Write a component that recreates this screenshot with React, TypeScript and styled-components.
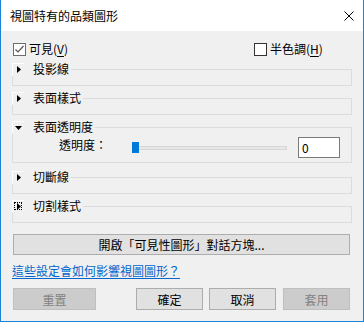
import React from 'react';
import styled, { createGlobalStyle } from 'styled-components';

const GlobalStyle = createGlobalStyle`
    html, body {
        margin:0;
        padding:0;
        background:#ffffff;
    }
    body {
        font-family:"Noto Sans CJK TC", "Noto Sans", sans-serif;
        font-size:12px;
        color:#000000;
    }
`
const Window = styled.div`
    width:364px;
    height:322px;
    box-sizing:border-box;
    border:1px solid #1883d7;
    border-top:none;
    background-color:#f0f0f0;
    display:flex;
    flex-direction:column;
`
const TitleBar = styled.div`
    height:31px;
    background-color:#ffffff;
    display:flex;
    align-items:center;
    justify-content:space-between;
    padding:0 9px 0 9px;
`
const TitleText = styled.span`
    font-size:12px;
    line-height:14px;
`
const Body = styled.div`
    flex:1;
    padding:11px 11px 0 11px;
    display:flex;
    flex-direction:column;
`
const CheckRow = styled.div`
    display:grid;
    grid-template-columns:241px auto;
    height:14px;
    margin-left:1px;
`
const CheckLabel = styled.label`
    display:flex;
    align-items:center;
    line-height:14px;
`
const Box = styled.span<{ $checked?: boolean }>`
    width:13px;
    height:13px;
    box-sizing:border-box;
    border:1px solid ${p => (p.$checked ? '#6d6d6d' : '#333333')};
    background:#ffffff;
    margin-right:3px;
    display:flex;
    align-items:center;
    justify-content:center;
`
const Key = styled.u`
    text-underline-offset:2px;
`
const Sections = styled.div`
    margin-top:6px;
    display:flex;
    flex-direction:column;
`
const SectionWrap = styled.div<{ $gap: number }>`
    margin-bottom:${p => p.$gap}px;
`
const Header = styled.div`
    display:flex;
    height:14px;
    align-items:center;
`
const ArrowBox = styled.span<{ $focus?: boolean }>`
    width:12px;
    height:12px;
    box-sizing:border-box;
    border-top:1px solid #ffffff;
    border-left:1px solid #ffffff;
    display:flex;
    align-items:center;
    justify-content:center;
    outline:${p => (p.$focus ? '1px dotted #000' : 'none')};
    outline-offset:-3px;
`
const HeaderLabel = styled.span`
    margin-left:9px;
    line-height:14px;
`
const HeaderLine = styled.span`
    flex:1;
    align-self:stretch;
    margin-top:7px;
    margin-left:2px;
    border-top:1px solid #dcdcdc;
    border-right:1px solid #dcdcdc;
`
const SectionBody = styled.div<{ $height: number }>`
    height:${p => p.$height}px;
    box-sizing:border-box;
    border:1px solid #dcdcdc;
    border-top:none;
`
const OpacityRow = styled.div`
    display:flex;
    align-items:center;
    padding:3px 0 0 46px;
`
const RowLabel = styled.span`
    width:73px;
    line-height:14px;
    margin-top:-6px;
`
const Slider = styled.div`
    width:155px;
    height:11px;
    position:relative;
    display:flex;
    align-items:center;
`
const Track = styled.div`
    width:100%;
    height:4px;
    box-sizing:border-box;
    background:#e7e7e7;
    border:1px solid #d6d6d6;
`
const Thumb = styled.div`
    position:absolute;
    left:0;
    top:0;
    width:7px;
    height:11px;
    background:#0078d7;
`
const NumberBox = styled.div`
    width:42px;
    height:21px;
    box-sizing:border-box;
    margin-left:11px;
    border:1px solid #7a7a7a;
    background:#ffffff;
    padding-left:3px;
    line-height:19px;
`
const WideButton = styled.button`
    margin:11px 0 0 1px;
    width:337px;
    height:21px;
    box-sizing:border-box;
    border:1px solid #adadad;
    background:#e1e1e1;
    font-family:inherit;
    font-size:12px;
    padding:0;
    color:#000;
`
const HelpLink = styled.a`
    margin-top:8px;
    line-height:16px;
    color:#0066cc;
    text-decoration:underline;
    text-underline-offset:2px;
    align-self:flex-start;
`
const Footer = styled.div`
    display:flex;
    margin:9px 0 0 1px;
`
const DlgButton = styled.button<{ $width: number; $left: number }>`
    width:${p => p.$width}px;
    margin-left:${p => p.$left}px;
    height:22px;
    box-sizing:border-box;
    border:1px solid ${p => (p.disabled ? '#bfbfbf' : '#adadad')};
    background:${p => (p.disabled ? '#cccccc' : '#e1e1e1')};
    color:${p => (p.disabled ? '#838383' : '#000000')};
    font-family:inherit;
    font-size:12px;
    padding:0;
`

const RightArrow = () => (
    <svg width="4" height="7" viewBox="0 0 4 7"><path d="M0 0L4 3.5L0 7Z" fill="#000" /></svg>
)
const DownArrow = () => (
    <svg width="7" height="4" viewBox="0 0 7 4"><path d="M0 0H7L3.5 4Z" fill="#000" /></svg>
)

type SectionProps = {
    title: string;
    open?: boolean;
    focus?: boolean;
    gap: number;
    children?: React.ReactNode;
}

const Section = ({ title, open, focus, gap, children }: SectionProps) => (
    <SectionWrap $gap={gap}>
        <Header>
            <ArrowBox $focus={focus}>{open ? <DownArrow /> : <RightArrow />}</ArrowBox>
            <HeaderLabel>{title}</HeaderLabel>
            <HeaderLine />
        </Header>
        <SectionBody $height={open ? 29 : 10}>{children}</SectionBody>
    </SectionWrap>
)

export default function App() {
    return (
        <>
            <GlobalStyle />
            <Window>
                <TitleBar>
                    <TitleText>視圖特有的品類圖形</TitleText>
                    <svg width="10" height="10" viewBox="0 0 10 10">
                        <path d="M0.5 0.5L9.5 9.5M9.5 0.5L0.5 9.5" stroke="#000" strokeWidth="1" />
                    </svg>
                </TitleBar>
                <Body>
                    <CheckRow>
                        <CheckLabel>
                            <Box $checked>
                                <svg width="11" height="11" viewBox="0 0 11 11">
                                    <path d="M1.5 5.5L4 8L9.5 2" stroke="#555" strokeWidth="1.2" fill="none" />
                                </svg>
                            </Box>
                            可見(<Key>V</Key>)
                        </CheckLabel>
                        <CheckLabel>
                            <Box />
                            半色調(<Key>H</Key>)
                        </CheckLabel>
                    </CheckRow>
                    <Sections>
                        <Section title="投影線" gap={5} />
                        <Section title="表面樣式" gap={5} />
                        <Section title="表面透明度" open gap={7}>
                            <OpacityRow>
                                <RowLabel>透明度：</RowLabel>
                                <Slider>
                                    <Track />
                                    <Thumb />
                                </Slider>
                                <NumberBox>0</NumberBox>
                            </OpacityRow>
                        </Section>
                        <Section title="切斷線" gap={5} />
                        <Section title="切割樣式" focus gap={0} />
                    </Sections>
                    <WideButton>開啟「可見性圖形」對話方塊...</WideButton>
                    <HelpLink href="#">這些設定會如何影響視圖圖形？</HelpLink>
                    <Footer>
                        <DlgButton $width={83} $left={0} disabled>重置</DlgButton>
                        <DlgButton $width={67} $left={40}>確定</DlgButton>
                        <DlgButton $width={67} $left={6}>取消</DlgButton>
                        <DlgButton $width={67} $left={7} disabled>套用</DlgButton>
                    </Footer>
                </Body>
            </Window>
        </>
    )
}
